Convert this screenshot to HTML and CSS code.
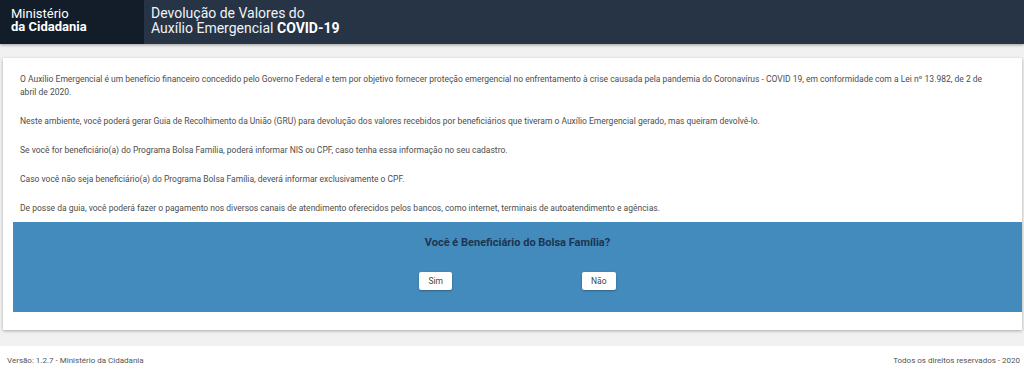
FILE: index.html
```html
<!DOCTYPE html>
<html lang="pt-BR">
<head>
<meta charset="utf-8">
<title>Devolução de Valores do Auxílio Emergencial</title>
<link rel="stylesheet" href="styles.css">
</head>
<body>
<header class="topbar">
  <div class="brand">
    <span class="brand-line">Ministério</span>
    <span class="brand-line brand-bold">da Cidadania</span>
  </div>
  <div class="apptitle">
    <span class="brand-line">Devolução de Valores do</span>
    <span class="brand-line">Auxílio Emergencial <b>COVID-19</b></span>
  </div>
</header>
<main class="card">
  <div class="texts">
    <p>O Auxílio Emergencial é um benefício financeiro concedido pelo Governo Federal e tem por objetivo fornecer proteção emergencial no enfrentamento à crise causada pela pandemia do Coronavírus - COVID 19, em conformidade com a Lei nº 13.982, de 2 de abril de 2020.</p>
    <p>Neste ambiente, você poderá gerar Guia de Recolhimento da União (GRU) para devolução dos valores recebidos por beneficiários que tiveram o Auxílio Emergencial gerado, mas queiram devolvê-lo.</p>
    <p>Se você for beneficiário(a) do Programa Bolsa Família, poderá informar NIS ou CPF, caso tenha essa informação no seu cadastro.</p>
    <p>Caso você não seja beneficiário(a) do Programa Bolsa Família, deverá informar exclusivamente o CPF.</p>
    <p>De posse da guia, você poderá fazer o pagamento nos diversos canais de atendimento oferecidos pelos bancos, como internet, terminais de autoatendimento e agências.</p>
  </div>
  <section class="question">
    <h2 class="question-title">Você é Beneficiário do Bolsa Família?</h2>
    <div class="answers">
      <button class="answer">Sim</button>
      <button class="answer">Não</button>
    </div>
  </section>
</main>
<footer class="footer">
  <span>Versão: 1.2.7 - Ministério da Cidadania</span>
  <span>Todos os direitos reservados - 2020</span>
</footer>
</body>
</html>
```
FILE: styles.css
```css
* { box-sizing: border-box; }
html, body { margin: 0; padding: 0; }
body {
  background: #f1f1f1;
  font-family: Roboto, "Liberation Sans", Arial, sans-serif;
  color: #555;
  width: 1024px;
  height: 374px;
  overflow: hidden;
}
.topbar {
  display: flex;
  height: 44px;
  background: #273445;
  box-shadow: 0 1px 3px rgba(0,0,0,0.35);
  color: #fff;
}
.brand {
  width: 144px;
  background: #121d29;
  padding: 7px 0 0 11px;
  display: flex;
  flex-direction: column;
  font-size: 13px;
  line-height: 13px;
}
.brand-line { display: block; }
.brand-bold { font-weight: 700; }
.apptitle {
  padding: 6px 0 0 7px;
  display: flex;
  flex-direction: column;
  font-size: 14px;
  line-height: 15px;
  color: #f0f2f5;
}
.apptitle b { font-weight: 700; color: #fff; }
.card {
  margin: 14px 2px 0 3px;
  background: #fff;
  box-shadow: 0 1px 3px rgba(0,0,0,0.3);
  padding: 15px 0 18px 10px;
}
.texts { padding: 0 27px 0 7px; }
.texts p {
  margin: 0 0 16px 0;
  font-size: 8.5px;
  line-height: 13px;
  color: #4d4d4d;
}
.texts p:last-child { margin-bottom: 7px; }
.question {
  background: #438bbc;
  padding: 14px 0 22px 0;
  display: flex;
  flex-direction: column;
  align-items: center;
}
.question-title {
  margin: 0;
  font-size: 11px;
  line-height: 14px;
  font-weight: 700;
  color: #1b3550;
}
.answers {
  margin-top: 22px;
  display: flex;
  gap: 130px;
}
.answer {
  border: none;
  background: #fff;
  border-radius: 2px;
  height: 18px;
  padding: 0 9px;
  font-family: Roboto, "Liberation Sans", Arial, sans-serif;
  font-size: 8.5px;
  color: #444;
  box-shadow: 0 1px 2px rgba(0,0,0,0.3);
}
.footer {
  margin-top: 16px;
  background: #fff;
  height: 40px;
  display: flex;
  justify-content: space-between;
  padding: 10px 4px 0 7px;
  font-size: 8px;
  line-height: 10px;
  color: #555;
}
```
